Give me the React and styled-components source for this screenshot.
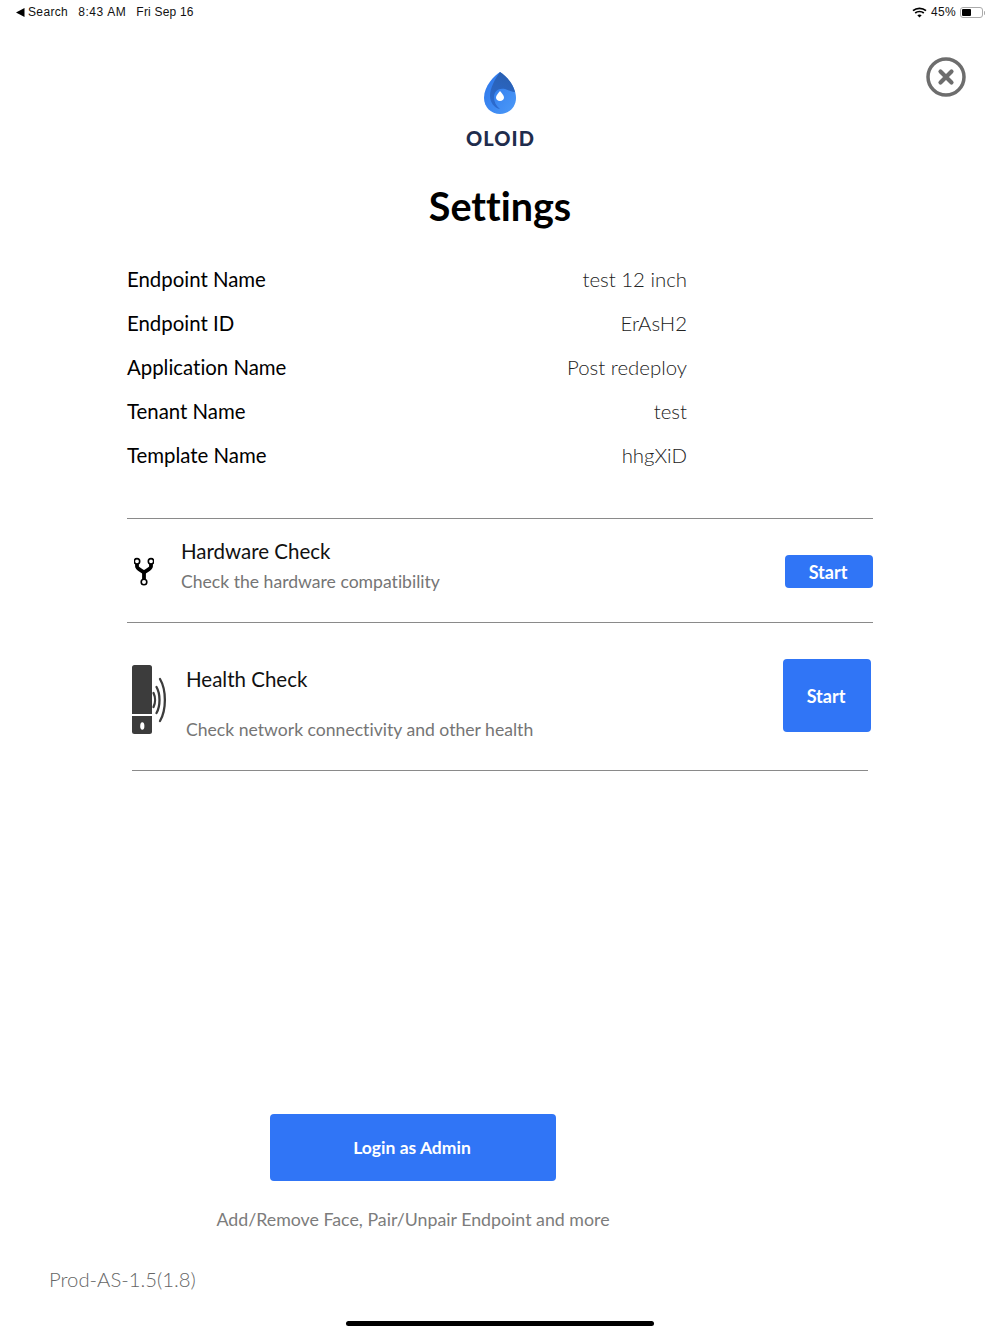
import React from "react";
import styled, { createGlobalStyle } from "styled-components";

const Global = createGlobalStyle`
  html, body { margin: 0; padding: 0; background: #fff; }
  body { font-family: Lato, "Open Sans", sans-serif; color: #000; font-variant-ligatures: none; }
  button { font-variant-ligatures: none; }
`;

const Page = styled.div`
  position: relative;
  width: 1000px;
  height: 1334px;
  overflow: hidden;
  background: #fff;
  display: flex;
  flex-direction: column;
`;

const StatusBar = styled.div`
  height: 24px;
  padding: 0 15px 0 16px;
  display: flex;
  justify-content: space-between;
  align-items: center;
  font-family: "Liberation Sans", Arial, sans-serif;
  font-size: 12px;
  letter-spacing: 0.35px;
  color: #111;
`;

const StatusGroup = styled.div`
  display: flex;
  align-items: center;
  gap: ${(p) => p.$gap}px;
`;

const BackGroup = styled.span`
  display: flex;
  align-items: center;
  gap: 3px;
`;

const TimeText = styled.span`
  letter-spacing: 0.6px;
`;

const DateText = styled.span`
  letter-spacing: 0.2px;
`;

const Battery = styled.span`
  width: 23px;
  height: 11px;
  box-sizing: border-box;
  border: 1px solid #aaa;
  border-radius: 3px;
  padding: 1px;
  margin-right: 2px;
  display: flex;
  position: relative;
  &::after {
    content: "";
    position: absolute;
    right: -3px;
    top: 3px;
    width: 1.5px;
    height: 4px;
    background: #aaa;
    border-radius: 0 1px 1px 0;
  }
`;

const BatteryFill = styled.span`
  width: 9px;
  background: #000;
  border-radius: 1px;
`;

const CloseButton = styled.button`
  position: absolute;
  top: 57px;
  left: 926px;
  width: 40px;
  height: 40px;
  padding: 0;
  border: none;
  background: none;
`;

const LogoBlock = styled.div`
  margin-top: 48px;
  display: flex;
  flex-direction: column;
  align-items: center;
`;

const LogoWord = styled.div`
  margin-top: 10px;
  font-size: 20px;
  line-height: 28px;
  font-weight: 900;
  letter-spacing: 1.100px;
  margin-right: -1px;
  color: #1f2d4d;
`;

const Title = styled.h1`
  margin: 27px 0 0;
  text-align: center;
  font-size: 39.500px;
  line-height: 54px;
  font-weight: 700;
`;

const InfoList = styled.div`
  margin: 24px 0 0 127px;
  width: 560px;
  display: flex;
  flex-direction: column;
`;

const InfoRow = styled.div`
  height: 44px;
  display: flex;
  justify-content: space-between;
  align-items: center;
  font-size: 20.400px;
`;

const InfoValue = styled.span`
  font-weight: 300;
  color: #222;
`;

const Divider = styled.div`
  height: 1px;
  background: #8a8a8a;
  margin: 0 ${(p) => p.$inset}px;
`;

const TopDivider = styled(Divider)`
  margin-top: 41px;
`;

const CheckRow = styled.div`
  margin: 0 127px;
  height: ${(p) => p.$height}px;
  display: flex;
  align-items: ${(p) => p.$align || "center"};
`;

const HardwareIcon = styled.div`
  width: 54px;
  padding: 3px 0 0 7px;
  box-sizing: border-box;
  display: flex;
`;

const HealthIcon = styled.div`
  width: 59px;
  padding: 42px 0 0 5px;
  box-sizing: border-box;
  display: flex;
`;

const CheckText = styled.div`
  flex: 1;
  display: flex;
  flex-direction: column;
`;

const HealthText = styled(CheckText)`
  padding-top: 42px;
  gap: 23px;
`;

const HardwareText = styled(CheckText)`
  gap: 3px;
  margin-top: -9px;
`;

const CheckTitle = styled.div`
  font-size: 20.500px;
  line-height: 29px;
  color: #111;
`;

const CheckDesc = styled.div`
  font-size: 17.600px;
  line-height: 26px;
  color: #757575;
`;

const StartButton = styled.button`
  border: none;
  background: #3075f6;
  color: #fff;
  font-family: inherit;
  font-size: 18px;
  font-weight: 700;
  border-radius: 4px;
  padding: 0 2px 0 0;
  width: 88px;
  height: ${(p) => p.$height}px;
  margin: ${(p) => p.$margin || "0"};
`;

const AdminBlock = styled.div`
  margin: 343px 0 0 270px;
  width: 286px;
  display: flex;
  flex-direction: column;
  align-items: center;
`;

const AdminButton = styled.button`
  width: 286px;
  height: 67px;
  border: none;
  border-radius: 4px;
  background: #3075f6;
  color: #fff;
  font-family: inherit;
  font-size: 17.500px;
  font-weight: 700;
  padding: 0 2px 0 0;
`;

const AdminHint = styled.div`
  margin-top: 25px;
  font-size: 17.800px;
  line-height: 26px;
  color: #7c7c7c;
  white-space: nowrap;
`;

const Version = styled.div`
  margin: 33px 0 0 49px;
  font-size: 20.300px;
  font-weight: 300;
  line-height: 28px;
  color: #666;
`;

const HomeBar = styled.div`
  position: absolute;
  left: 346px;
  bottom: 8px;
  width: 308px;
  height: 5px;
  border-radius: 3px;
  background: #000;
`;

const infos = [
  ["Endpoint Name", "test 12 inch"],
  ["Endpoint ID", "ErAsH2"],
  ["Application Name", "Post redeploy"],
  ["Tenant Name", "test"],
  ["Template Name", "hhgXiD"],
];

const Wifi = () => (
  <svg width="15" height="11" viewBox="0 0 15 11" fill="none" stroke="#000" strokeWidth="1.7">
    <path d="M1 3.600C4.600.5 10.400.5 14 3.600" />
    <path d="M3.200 6C5.600 4 9.400 4 11.800 6" />
    <path d="M7.500 10.600L5.300 8.200c1.200-1 3.200-1 4.400 0z" fill="#000" stroke="none" />
  </svg>
);

const Drop = () => (
  <svg width="32" height="42" viewBox="0 0 32 42">
    <defs>
      <linearGradient id="dropBase" x1="0" y1="0" x2="1" y2="1">
        <stop offset="0" stopColor="#2b74ea" />
        <stop offset="1" stopColor="#4c9af8" />
      </linearGradient>
      <linearGradient id="dropDark" x1="0.6" y1="0" x2="0.3" y2="1">
        <stop offset="0" stopColor="#2a5fb0" />
        <stop offset="1" stopColor="#2c6bd0" />
      </linearGradient>
    </defs>
    <path d="M16 0C22 4 32 14 32 26C32 35 25 42 16 42C7 42 0 35 0 26C0 14 10 4 16 0Z" fill="url(#dropBase)" />
    <path d="M16 0C22 4 29 11 31 20C28 20.500 25 18 21 17C15 15.500 10 19 10 25C10 30 12 34 16 37C10 36 6 30 6 24C6 16 11 7 16 0Z" fill="url(#dropDark)" />
    <path d="M16 19C18 21.500 20 23.500 20 25.500C20 27.500 18.200 29 16 29C13.800 29 12 27.500 12 25.500C12 23.500 14 21.500 16 19Z" fill="#fff" />
  </svg>
);

const Fork = () => (
  <svg width="20" height="30" viewBox="0 0 20 30" fill="none" stroke="#000">
    <path d="M3 7V9.500C3 11.500 6.500 13 10 15.500C13.500 13 17 11.500 17 9.500V7" strokeWidth="3.800" />
    <path d="M10 14V22" strokeWidth="3.800" />
    <circle cx="3" cy="4.300" r="2.700" fill="#fff" strokeWidth="1.600" />
    <circle cx="17" cy="4.300" r="2.700" fill="#fff" strokeWidth="1.600" />
    <circle cx="10" cy="25" r="2.800" fill="#fff" strokeWidth="1.600" />
  </svg>
);

const Reader = () => (
  <svg width="35" height="70" viewBox="0 0 35 70" fill="none">
    <path d="M2.500 0H17.500A2.500 2.500 0 0 1 20 2.500V49H0V2.500A2.500 2.500 0 0 1 2.500 0Z" fill="#3c3c3c" />
    <path d="M0 51H20V66.500A2.500 2.500 0 0 1 17.500 69H2.500A2.500 2.500 0 0 1 0 66.500Z" fill="#3c3c3c" />
    <ellipse cx="10.300" cy="61" rx="2.100" ry="3.800" fill="#fff" />
    <g stroke="#3c3c3c" strokeWidth="2.300" strokeLinecap="round">
      <path d="M21.500 28C23.500 32 23.500 38 21.500 42" />
      <path d="M24.500 22C28.500 29 28.500 41 24.500 48" />
      <path d="M28 14C34.500 25 34.500 45 28 56" />
    </g>
  </svg>
);

const CloseIcon = () => (
  <svg width="40" height="40" viewBox="0 0 40 40" fill="none" stroke="#6d6d6d">
    <circle cx="20" cy="20" r="18" strokeWidth="3.500" />
    <path d="M14.500 14.500L25.500 25.500M25.500 14.500L14.500 25.500" strokeWidth="4.200" strokeLinecap="round" />
  </svg>
);

export default function App() {
  return (
    <Page>
      <Global />
      <StatusBar>
        <StatusGroup $gap={10}>
          <BackGroup>
            <svg width="9" height="9" viewBox="0 0 9 9"><path d="M0 4.500L8.500 0V9Z" fill="#000" /></svg>
            Search
          </BackGroup>
          <TimeText>8:43 AM</TimeText>
          <DateText>Fri Sep 16</DateText>
        </StatusGroup>
        <StatusGroup $gap={4}>
          <Wifi />
          <span>45%</span>
          <Battery><BatteryFill /></Battery>
        </StatusGroup>
      </StatusBar>
      <CloseButton aria-label="Close"><CloseIcon /></CloseButton>
      <LogoBlock>
        <Drop />
        <LogoWord>OLOID</LogoWord>
      </LogoBlock>
      <Title>Settings</Title>
      <InfoList>
        {infos.map(([k, v]) => (
          <InfoRow key={k}>
            <span>{k}</span>
            <InfoValue>{v}</InfoValue>
          </InfoRow>
        ))}
      </InfoList>
      <TopDivider $inset={127} />
      <CheckRow $height={103}>
        <HardwareIcon><Fork /></HardwareIcon>
        <HardwareText>
          <CheckTitle>Hardware Check</CheckTitle>
          <CheckDesc>Check the hardware compatibility</CheckDesc>
        </HardwareText>
        <StartButton $height={33} $margin="2px 0 0">Start</StartButton>
      </CheckRow>
      <Divider $inset={127} />
      <CheckRow $height={147} $align="flex-start">
        <HealthIcon><Reader /></HealthIcon>
        <HealthText>
          <CheckTitle>Health Check</CheckTitle>
          <CheckDesc>Check network connectivity and other health</CheckDesc>
        </HealthText>
        <StartButton $height={73} $margin="36px 2px 0 0">Start</StartButton>
      </CheckRow>
      <Divider $inset={132} />
      <AdminBlock>
        <AdminButton>Login as Admin</AdminButton>
        <AdminHint>Add/Remove Face, Pair/Unpair Endpoint and more</AdminHint>
      </AdminBlock>
      <Version>Prod-AS-1.5(1.8)</Version>
      <HomeBar />
    </Page>
  );
}
